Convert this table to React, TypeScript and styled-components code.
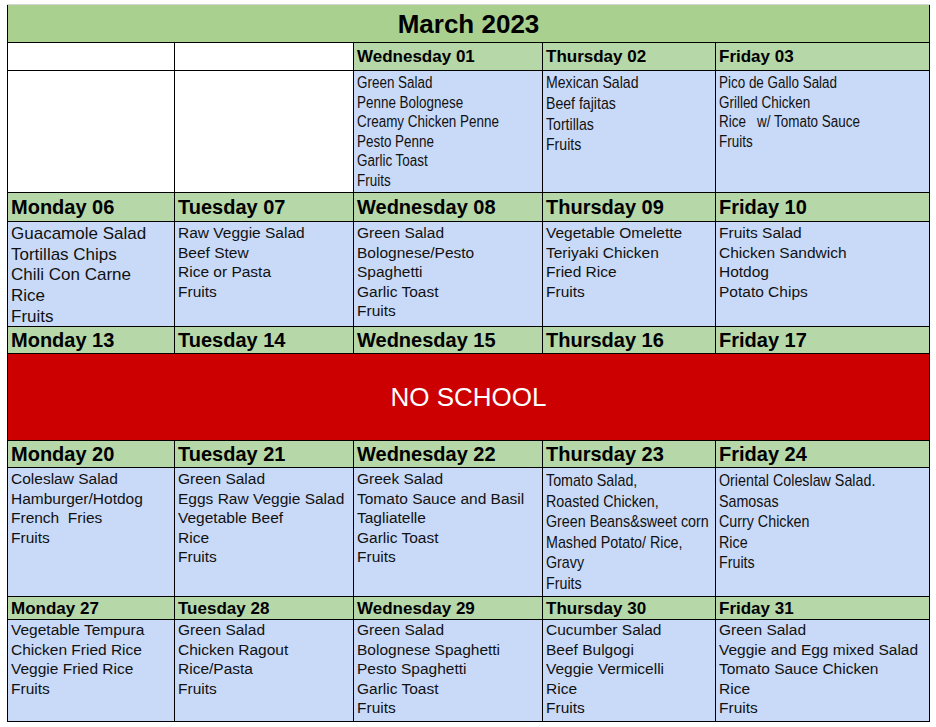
import React from "react";
import styled, { createGlobalStyle } from "styled-components";

const GlobalStyle = createGlobalStyle`
  html, body { margin: 0; padding: 0; background: #ffffff; }
  body { font-family: "Liberation Sans", Arial, sans-serif; color: #000; }
`;

const Calendar = styled.div`
  margin: 4px 0 0 7px;
  width: max-content;
  display: grid;
  grid-template-columns: 166px 178px 188px 172px 213px;
  grid-template-rows: 37px 27px 121px 28px 104px 26px 86px 26px 128px 22px 101px;
  gap: 1px;
  padding: 0 1px 1px;
  background: #000;
  border-top: 1px solid #d4d4d4;
`;

const Title = styled.div`
  grid-column: 1 / -1;
  background: #a9d08e;
  display: flex;
  align-items: center;
  justify-content: center;
  padding-top: 1px;
  font-size: 26px;
  font-weight: bold;
`;

const DayHeader = styled.div<{ $size: number; $blank?: boolean; $pt?: number }>`
  background: ${(p) => (p.$blank ? "#ffffff" : "#b6d7a8")};
  display: flex;
  align-items: center;
  padding: ${(p) => p.$pt ?? 0}px 3px 0;
  font-size: ${(p) => p.$size}px;
  font-weight: bold;
  white-space: nowrap;
  overflow: hidden;
`;

const MenuCell = styled.div<{
  $size: number;
  $lh: number;
  $blank?: boolean;
  $pt?: number;
}>`
  background: ${(p) => (p.$blank ? "#ffffff" : "#c9daf8")};
  padding: ${(p) => p.$pt ?? 1}px 3px 0;
  font-size: ${(p) => p.$size}px;
  line-height: ${(p) => p.$lh}px;
  overflow: hidden;
  color: #111;
`;

/* condensed lines: the reference uses a narrow face, approximated by a horizontal squeeze */
const Lines = styled.div<{ $squeeze?: number }>`
  white-space: pre;
  transform: ${(p) => (p.$squeeze ? `scaleX(${p.$squeeze})` : "none")};
  transform-origin: left top;
`;

const Closed = styled.div`
  grid-column: 1 / -1;
  background: #cc0000;
  color: #ffffff;
  display: flex;
  align-items: center;
  justify-content: center;
  font-size: 26px;
`;

type Menu = { lines: string[]; size: number; lh: number; squeeze?: number; pt?: number } | null;
type Week = {
  headers: string[];
  headerSize: number;
  headerPt?: number;
  menus?: Menu[];
  closed?: boolean;
};

const std = (lines: string[], pt = 1): Menu => ({ lines, size: 15.5, lh: 19.5, pt });

const weeks: Week[] = [
  {
    headers: ["", "", "Wednesday 01", "Thursday 02", "Friday 03"],
    headerSize: 17,
    menus: [
      null,
      null,
      {
        lines: ["Green Salad", "Penne Bolognese", "Creamy Chicken Penne", "Pesto Penne", "Garlic Toast", "Fruits"],
        size: 16,
        lh: 19.6,
        squeeze: 0.84,
        pt: 2,
      },
      { lines: ["Mexican Salad", "Beef fajitas", "Tortillas", "Fruits"], size: 17, lh: 20.8, squeeze: 0.83, pt: 2 },
      {
        lines: ["Pico de Gallo Salad", "Grilled Chicken", "Rice   w/ Tomato Sauce", "Fruits"],
        size: 16,
        lh: 19.6,
        squeeze: 0.84,
        pt: 2,
      },
    ],
  },
  {
    headers: ["Monday 06", "Tuesday 07", "Wednesday 08", "Thursday 09", "Friday 10"],
    headerSize: 20,
    menus: [
      { lines: ["Guacamole Salad", "Tortillas Chips", "Chili Con Carne", "Rice", "Fruits"], size: 17, lh: 20.7, pt: 2 },
      std(["Raw Veggie Salad", "Beef Stew", "Rice or Pasta", "Fruits"]),
      std(["Green Salad", "Bolognese/Pesto", "Spaghetti", "Garlic Toast", "Fruits"]),
      std(["Vegetable Omelette", "Teriyaki Chicken", "Fried Rice", "Fruits"]),
      std(["Fruits Salad", "Chicken Sandwich", "Hotdog", "Potato Chips"]),
    ],
  },
  {
    headers: ["Monday 13", "Tuesday 14", "Wednesday 15", "Thursday 16", "Friday 17"],
    headerSize: 20,
    closed: true,
  },
  {
    headers: ["Monday 20", "Tuesday 21", "Wednesday 22", "Thursday 23", "Friday 24"],
    headerSize: 20,
    menus: [
      std(["Coleslaw Salad", "Hamburger/Hotdog", "French  Fries", "Fruits"], 1),
      std(["Green Salad", "Eggs Raw Veggie Salad", "Vegetable Beef", "Rice", "Fruits"], 1),
      std(["Greek Salad", "Tomato Sauce and Basil", "Tagliatelle", "Garlic Toast", "Fruits"], 1),
      {
        lines: ["Tomato Salad,", "Roasted Chicken,", "Green Beans&sweet corn", "Mashed Potato/ Rice,", "Gravy", "Fruits"],
        size: 17,
        lh: 20.6,
        squeeze: 0.84,
        pt: 3,
      },
      {
        lines: ["Oriental Coleslaw Salad.", "Samosas", "Curry Chicken", "Rice", "Fruits"],
        size: 17,
        lh: 20.6,
        squeeze: 0.84,
        pt: 3,
      },
    ],
  },
  {
    headers: ["Monday 27", "Tuesday 28", "Wednesday 29", "Thursday 30", "Friday 31"],
    headerSize: 17,
    headerPt: 2,
    menus: [
      std(["Vegetable Tempura", "Chicken Fried Rice", "Veggie Fried Rice", "Fruits"], 0),
      std(["Green Salad", "Chicken Ragout", "Rice/Pasta", "Fruits"], 0),
      std(["Green Salad", "Bolognese Spaghetti", "Pesto Spaghetti", "Garlic Toast", "Fruits"], 0),
      std(["Cucumber Salad", "Beef Bulgogi", "Veggie Vermicelli", "Rice", "Fruits"], 0),
      std(["Green Salad", "Veggie and Egg mixed Salad", "Tomato Sauce Chicken", "Rice", "Fruits"], 0),
    ],
  },
];

export default function App() {
  return (
    <>
      <GlobalStyle />
      <Calendar>
        <Title>March 2023</Title>
        {weeks.map((w, wi) => (
          <React.Fragment key={wi}>
            {w.headers.map((h, i) => (
              <DayHeader key={`h${i}`} $size={w.headerSize} $blank={!h} $pt={w.headerPt}>
                {h}
              </DayHeader>
            ))}
            {w.closed ? (
              <Closed>NO SCHOOL</Closed>
            ) : (
              w.menus!.map((m, i) =>
                m ? (
                  <MenuCell key={`m${i}`} $size={m.size} $lh={m.lh} $pt={m.pt}>
                    <Lines $squeeze={m.squeeze}>{m.lines.join("\n")}</Lines>
                  </MenuCell>
                ) : (
                  <MenuCell key={`m${i}`} $size={16} $lh={20} $blank />
                )
              )
            )}
          </React.Fragment>
        ))}
      </Calendar>
    </>
  );
}
